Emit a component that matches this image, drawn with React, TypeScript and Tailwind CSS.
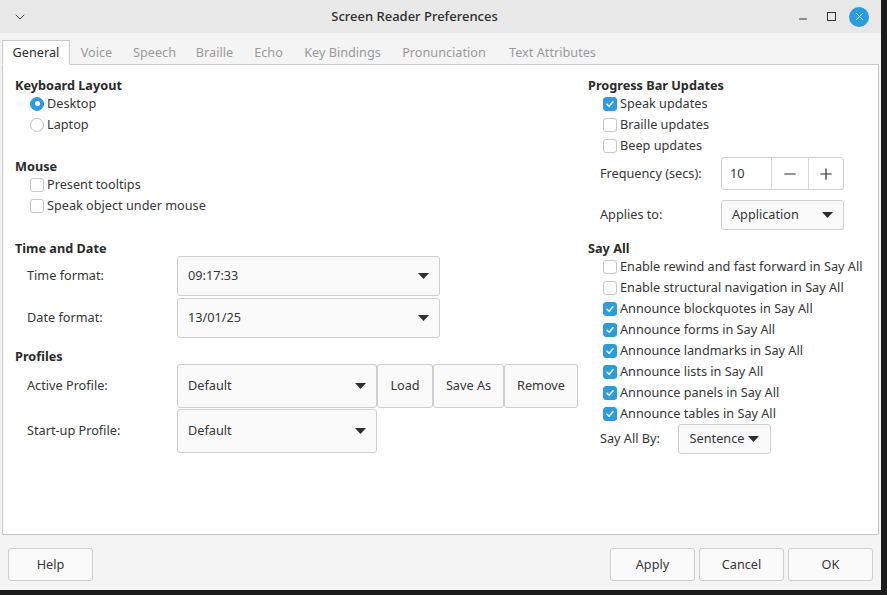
import { ChevronDown, X, Minus, Plus } from 'lucide-react';

// Reusable bits
const Check = ({ checked, label }: { checked?: boolean; label: string }) => (
    <div className="h-[21px] flex items-center">
        <span
            className={`w-[14px] h-[14px] rounded-[3px] border flex items-center justify-center shrink-0 ${checked ? 'bg-[#2a9de0] border-[#2a9de0]' : 'bg-white border-[#c6c6c6]'
                }`}
        >
            {checked && (
                <svg width="10" height="10" viewBox="0 0 10 10">
                    <path d="M2 5.2 L4.1 7.3 L8 2.8" fill="none" stroke="white" strokeWidth="1.6" strokeLinecap="round" strokeLinejoin="round" />
                </svg>
            )}
        </span>
        <span className="ml-[3px] whitespace-nowrap">{label}</span>
    </div>
);

const Radio = ({ checked, label }: { checked?: boolean; label: string }) => (
    <div className="h-[21px] flex items-center">
        <span
            className={`w-[14px] h-[14px] rounded-full border flex items-center justify-center shrink-0 ${checked ? 'bg-[#2a9de0] border-[#2a9de0]' : 'bg-white border-[#c6c6c6]'
                }`}
        >
            {checked && <span className="w-[5px] h-[5px] rounded-full bg-white" />}
        </span>
        <span className="ml-[3px]">{label}</span>
    </div>
);

const Arrow = () => (
    <svg width="11" height="6" viewBox="0 0 11 6" className="shrink-0">
        <path d="M0 0 H11 L5.5 6 Z" fill="#2e2e2e" />
    </svg>
);

const Combo = ({ value, className }: { value: string; className: string }) => (
    <div className={`border border-[#cfcfcf] rounded-[3px] bg-[#fafafa] flex items-center justify-between pl-[10px] pr-[10px] ${className}`}>
        <span>{value}</span>
        <Arrow />
    </div>
);

const Btn = ({ label, className }: { label: string; className: string }) => (
    <div className={`border border-[#cfcfcf] rounded-[3px] bg-[#fafafa] flex items-center justify-center ${className}`}>
        {label}
    </div>
);

const Heading = ({ text, className = '' }: { text: string; className?: string }) => (
    <div className={`h-[16px] flex items-center font-bold text-[#2b2b2b] ${className}`}>
        <span className="translate-y-[1px]">{text}</span>
    </div>
);

const TABS = [
    { name: 'General', w: 'w-[68px]' },
    { name: 'Voice', w: 'w-[53px]' },
    { name: 'Speech', w: 'w-[63px]' },
    { name: 'Braille', w: 'w-[57px]' },
    { name: 'Echo', w: 'w-[51px]' },
    { name: 'Key Bindings', w: 'w-[97px]' },
    { name: 'Pronunciation', w: 'w-[106px]' },
    { name: 'Text Attributes', w: 'w-[111px]' },
];

const SAY_ALL = [
    { label: 'Enable rewind and fast forward in Say All', checked: false },
    { label: 'Enable structural navigation in Say All', checked: false },
    { label: 'Announce blockquotes in Say All', checked: true },
    { label: 'Announce forms in Say All', checked: true },
    { label: 'Announce landmarks in Say All', checked: true },
    { label: 'Announce lists in Say All', checked: true },
    { label: 'Announce panels in Say All', checked: true },
    { label: 'Announce tables in Say All', checked: true },
];

export default function App() {
    return (
        <div
            className="w-[887px] h-[595px] bg-[#1c1c1c] overflow-hidden text-[12.7px] text-[#363636]"
            style={{ fontFamily: '"Noto Sans", "Open Sans", sans-serif' }}
        >
            <div className="w-[881px] h-[590px] bg-[#f4f4f4] flex flex-col">
                {/* Title bar */}
                <div className="h-[33px] bg-[#e8e8e8] flex items-center shrink-0">
                    <div className="w-[40px] flex justify-center">
                        <ChevronDown size={16} strokeWidth={1.5} className="text-[#444]" />
                    </div>
                    <div className="flex-1 text-center text-[#2e2e2e] font-medium text-[13px]">Screen Reader Preferences</div>
                    <div className="flex items-center pr-[8px]">
                        <div className="w-[28px] flex justify-center">
                            <Minus size={12} strokeWidth={2} className="text-[#333] translate-y-[2px]" />
                        </div>
                        <div className="w-[28px] flex justify-center">
                            <span className="w-[9px] h-[9px] border-[1.5px] border-[#333]" />
                        </div>
                        <div className="w-[28px] flex justify-center">
                            <span className="w-[20px] h-[20px] rounded-full bg-[#2a9de0] flex items-center justify-center">
                                <X size={13} strokeWidth={1.6} className="text-white" />
                            </span>
                        </div>
                    </div>
                </div>

                {/* Tabs */}
                <div className="flex mt-[7px] px-[2px] relative z-10 -mb-px h-[25px] shrink-0">
                    {TABS.map((t, i) => (
                        <div
                            key={t.name}
                            className={`${t.w} flex items-center justify-center ${i === 0
                                ? 'bg-white border border-b-white border-[#c8c8c8] text-[#2e2e2e]'
                                : 'text-[#9a9a9a]'
                                }`}
                        >
                            {t.name}
                        </div>
                    ))}
                </div>

                {/* Panel */}
                <div className="mx-[2px] h-[471px] bg-white border border-[#c8c8c8] flex shrink-0">
                    {/* Left column */}
                    <div className="w-[585px] pl-[12px] pt-[12px] flex flex-col">
                        <Heading text="Keyboard Layout" />
                        <div className="pl-[15px]">
                            <Radio checked label="Desktop" />
                            <Radio label="Laptop" />
                        </div>

                        <Heading text="Mouse" className="mt-[23px]" />
                        <div className="pl-[15px]">
                            <Check label="Present tooltips" />
                            <Check label="Speak object under mouse" />
                        </div>

                        <Heading text="Time and Date" className="mt-[24px]" />
                        <div className="flex items-center h-[40px] pl-[12px]">
                            <span className="w-[150px]">Time format:</span>
                            <Combo value="09:17:33" className="w-[263px] h-[40px]" />
                        </div>
                        <div className="flex items-center h-[40px] mt-[2px] pl-[12px]">
                            <span className="w-[150px]">Date format:</span>
                            <Combo value="13/01/25" className="w-[263px] h-[40px]" />
                        </div>

                        <Heading text="Profiles" className="mt-[10px]" />
                        <div className="flex items-center h-[44px] pl-[12px]">
                            <span className="w-[150px]">Active Profile:</span>
                            <Combo value="Default" className="w-[200px] h-[44px]" />
                            <Btn label="Load" className="w-[56px] h-[44px]" />
                            <Btn label="Save As" className="w-[71px] h-[44px]" />
                            <Btn label="Remove" className="w-[74px] h-[44px]" />
                        </div>
                        <div className="flex items-center h-[44px] mt-[1px] pl-[12px]">
                            <span className="w-[150px]">Start-up Profile:</span>
                            <Combo value="Default" className="w-[200px] h-[44px]" />
                        </div>
                    </div>

                    {/* Right column */}
                    <div className="flex-1 pt-[12px] flex flex-col">
                        <Heading text="Progress Bar Updates" />
                        <div className="pl-[15px]">
                            <Check checked label="Speak updates" />
                            <Check label="Braille updates" />
                            <Check label="Beep updates" />
                        </div>
                        <div className="flex items-center h-[33px] mt-[1px] pl-[12px]">
                            <span className="w-[121px]">Frequency (secs):</span>
                            <div className="w-[123px] h-[33px] border border-[#cfcfcf] rounded-[3px] flex bg-white">
                                <span className="w-[49px] flex items-center pl-[8px]">10</span>
                                <span className="w-[37px] border-l border-[#d8d8d8] flex items-center justify-center">
                                    <Minus size={18} strokeWidth={1.6} className="text-[#2e2e2e]" />
                                </span>
                                <span className="flex-1 border-l border-[#d8d8d8] flex items-center justify-center">
                                    <Plus size={18} strokeWidth={1.6} className="text-[#2e2e2e]" />
                                </span>
                            </div>
                        </div>
                        <div className="flex items-center h-[30px] mt-[10px] pl-[12px]">
                            <span className="w-[121px]">Applies to:</span>
                            <Combo value="Application" className="w-[123px] h-[30px]" />
                        </div>

                        <Heading text="Say All" className="mt-[10px]" />
                        <div className="pl-[15px]">
                            {SAY_ALL.map((s) => (
                                <Check key={s.label} checked={s.checked} label={s.label} />
                            ))}
                        </div>
                        <div className="flex items-center h-[30px] pl-[12px]">
                            <span className="w-[78px]">Say All By:</span>
                            <div className="w-[93px] h-[30px] border border-[#cfcfcf] rounded-[3px] bg-[#fafafa] flex items-center justify-center gap-[4px]">
                                <span>Sentence</span>
                                <Arrow />
                            </div>
                        </div>
                    </div>
                </div>

                {/* Footer buttons */}
                <div className="flex items-center px-[8px] mt-[13px]">
                    <Btn label="Help" className="w-[85px] h-[33px]" />
                    <div className="flex-1" />
                    <Btn label="Apply" className="w-[85px] h-[33px]" />
                    <Btn label="Cancel" className="w-[85px] h-[33px] ml-[4px]" />
                    <Btn label="OK" className="w-[85px] h-[33px] ml-[4px]" />
                </div>
            </div>
        </div>
    );
}
